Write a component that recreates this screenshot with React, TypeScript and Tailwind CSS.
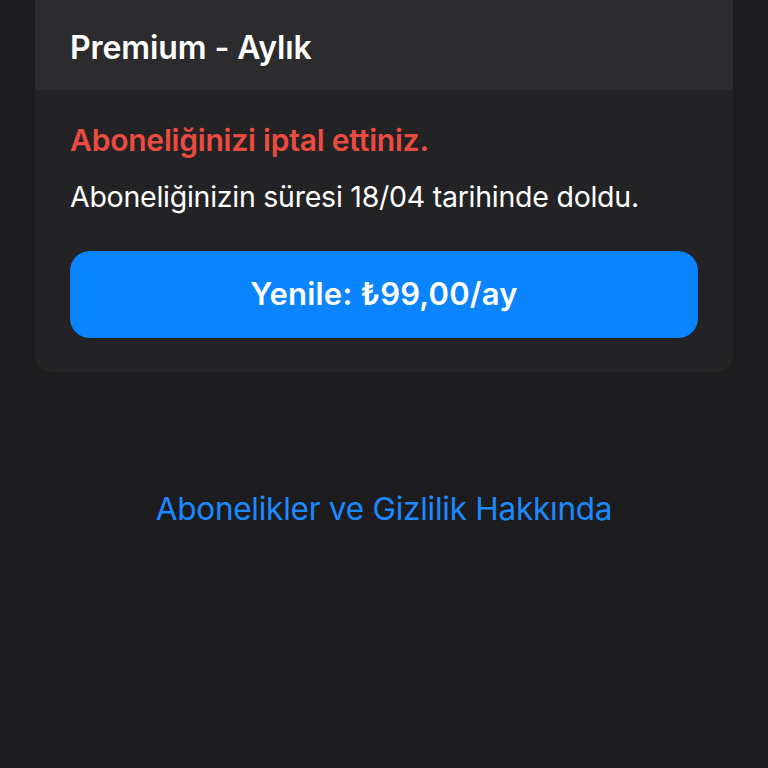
export default function App() {
  return (
    <div
      className="min-h-[768px] w-[768px] bg-[#1c1c1e] text-white"
      style={{ fontFamily: 'Inter, "Noto Sans", sans-serif' }}
    >
      <div className="px-[35px]">
        <div className="overflow-hidden rounded-b-[16px] bg-[#232325]">
          <div className="flex h-[90px] items-center bg-[#2c2c2e] px-[35px] pt-[6px]">
            <h1 className="text-[32px] font-semibold leading-none tracking-[-0.1px]">Premium - Aylık</h1>
          </div>
          <div className="px-[35px] pt-[33px] pb-[34px]">
            <p className="text-[30px] font-semibold leading-[34px] text-[#ec4c3f] tracking-[-0.2px]">
              Aboneliğinizi iptal ettiniz.
            </p>
            <p className="mt-[23px] text-[28.5px] leading-[34px] tracking-[-0.25px]">
              Aboneliğinizin süresi 18/04 tarihinde doldu.
            </p>
            <button className="mt-[37px] flex h-[87px] w-full items-center justify-center rounded-[20px] bg-[#0a84ff] text-[31px] font-semibold tracking-[0.2px] text-white">
              Yenile: ₺99,00/ay
            </button>
          </div>
        </div>
      </div>
      <div className="mt-[121px] text-center">
        <a className="text-[31.5px] leading-none tracking-[-0.25px] text-[#1c8aff]">Abonelikler ve Gizlilik Hakkında</a>
      </div>
    </div>
  );
}
